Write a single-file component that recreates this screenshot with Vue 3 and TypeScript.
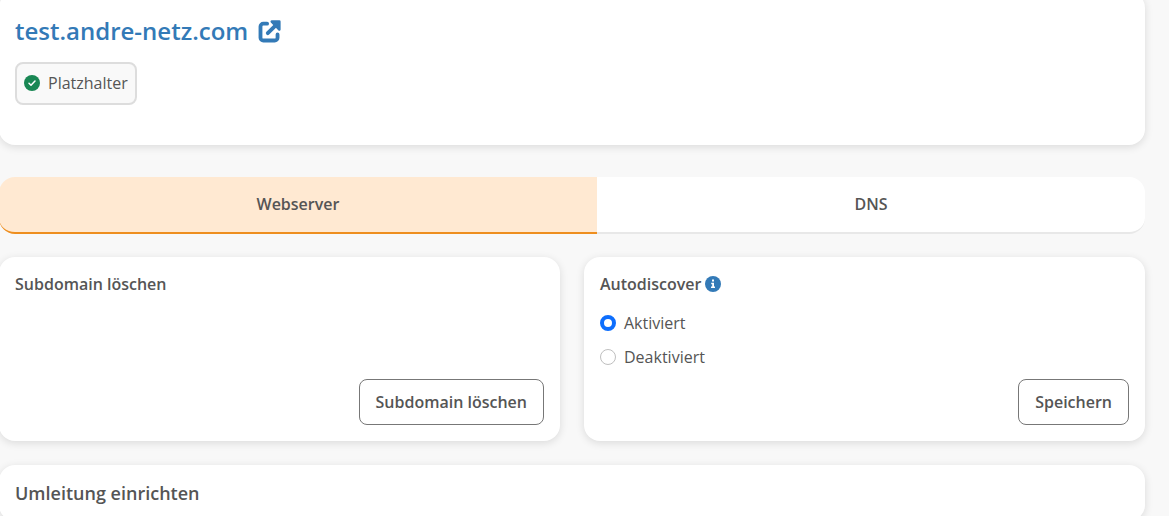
<script setup lang="ts">
import { ref } from 'vue'

type Tab = 'webserver' | 'dns'

const domain = 'test.andre-netz.com'
const tabs: { id: Tab; label: string }[] = [
  { id: 'webserver', label: 'Webserver' },
  { id: 'dns', label: 'DNS' },
]
const options = [
  { id: 'autodiscover-on', value: 'on', label: 'Aktiviert' },
  { id: 'autodiscover-off', value: 'off', label: 'Deaktiviert' },
]
const activeTab = ref<Tab>('webserver')
const autodiscover = ref('on')
</script>

<template>
  <main class="page">
    <section class="card header-card">
      <h1 class="domain">
        <a href="#" class="domain-link">
          {{ domain }}
          <svg class="external" viewBox="0 0 24 24" aria-hidden="true">
            <path
              d="M9.5 3.8H5.6a3 3 0 0 0-3 3v11.6a3 3 0 0 0 3 3h11.8a3 3 0 0 0 3-3V15"
              fill="none" stroke="currentColor" stroke-width="4" stroke-linecap="round"
            />
            <path d="M10.2 13.8 19 5" fill="none" stroke="currentColor" stroke-width="4" stroke-linecap="round" />
            <path d="M14.3 0.3H22.3a1.3 1.3 0 0 1 1.3 1.3V10a1.3 1.3 0 0 1-2.2.9L13.4 2.5a1.3 1.3 0 0 1 .9-2.2Z" fill="currentColor" />
          </svg>
        </a>
      </h1>
      <span class="badge">
        <svg class="dot-icon" viewBox="0 0 16 16" aria-hidden="true">
          <circle cx="8" cy="8" r="8" fill="#198754" />
          <path d="m5 8.3 2 2 4-4.2" fill="none" stroke="#fff" stroke-width="1.5" stroke-linecap="round" stroke-linejoin="round" />
        </svg>
        Platzhalter
      </span>
    </section>

    <div class="tabs" role="tablist">
      <button
        v-for="tab in tabs"
        :key="tab.id"
        type="button"
        role="tab"
        class="tab"
        :class="{ active: activeTab === tab.id }"
        :aria-selected="activeTab === tab.id"
        @click="activeTab = tab.id"
      >{{ tab.label }}</button>
    </div>

    <div class="columns">
      <section class="card">
        <h2 class="title">Subdomain löschen</h2>
        <button type="button" class="action">Subdomain löschen</button>
      </section>
      <form class="card" @submit.prevent>
        <h2 class="title">
          Autodiscover
          <svg class="dot-icon" viewBox="0 0 16 16" aria-hidden="true">
            <circle cx="8" cy="8" r="8" fill="#337ab7" />
            <path d="M7 3.6h2v2H7zM6.2 6.8H9v3.8h1v1.5H6v-1.5h1.2V8.2h-1z" fill="#fff" />
          </svg>
        </h2>
        <div class="options">
          <div v-for="option in options" :key="option.id" class="option">
            <input :id="option.id" v-model="autodiscover" class="radio" type="radio" name="autodiscover" :value="option.value" />
            <label :for="option.id">{{ option.label }}</label>
          </div>
        </div>
        <button type="submit" class="action">Speichern</button>
      </form>
    </div>

    <section class="card">
      <h2 class="title large">Umleitung einrichten</h2>
    </section>
  </main>
</template>

<style>
html {
  background: #f8f8f8;
}
body {
  overflow: hidden;
}
</style>

<style scoped>
.page {
  display: flex;
  flex-direction: column;
  margin: -8px 24px 0 -1px;
  color: #555;
  font: 400 16px/24px "Open Sans", "Noto Sans", sans-serif;
}
.card {
  display: flex;
  flex-direction: column;
  box-sizing: border-box;
  padding: 16px;
  border-radius: 16px;
  background: #fff;
  box-shadow: 0 2px 8px rgba(0, 0, 0, 0.12);
}
.header-card {
  align-items: flex-start;
  gap: 12px;
  margin-bottom: 32px;
  padding: 20px 16px 40px;
}
.domain {
  margin: 0;
  font-size: 24px;
  font-weight: 600;
  line-height: 38px;
}
.domain-link {
  display: flex;
  align-items: center;
  gap: 10px;
  color: #337ab7;
  text-decoration: none;
}
.external {
  width: 23px;
  height: 23px;
}
.badge {
  display: flex;
  align-items: center;
  gap: 8px;
  padding: 7px 7px 8px;
  border: 2px solid #ddd;
  border-radius: 8px;
  background: #f9f9f9;
}
.dot-icon {
  flex: none;
  width: 16px;
  height: 16px;
}
.tabs {
  display: flex;
  overflow: hidden;
  margin-bottom: 23px;
}
.tab {
  flex: 1 1 auto;
  padding: 15px 16px 16px;
  border: 0;
  border-bottom: 2px solid #e8e8e8;
  background: #fff;
  color: inherit;
  font: inherit;
  font-weight: 600;
  cursor: pointer;
}
.tab:first-child {
  border-radius: 16px 0 0 16px;
}
.tab:last-child {
  border-radius: 0 16px 16px 0;
}
.tab.active {
  border-color: #ee8e1e;
  background: #ffe9d2;
}
.columns {
  display: grid;
  grid-template-columns: 1fr 1fr;
  gap: 24px;
  margin-bottom: 24px;
}
.title {
  display: flex;
  align-items: center;
  gap: 4px;
  margin: 0;
  font-size: 16px;
  font-weight: 600;
  line-height: 22px;
}
.large {
  font-size: 18px;
  line-height: 24px;
}
.options {
  display: flex;
  flex-direction: column;
  gap: 10px;
  margin: 16px 0 10px;
}
.option {
  display: flex;
  align-items: center;
  gap: 8px;
}
.radio {
  appearance: none;
  box-sizing: border-box;
  width: 16px;
  height: 16px;
  margin: 0;
  border: 1px solid #bfbfbf;
  border-radius: 50%;
  background: #fff;
}
.radio:checked {
  border: 4px solid #0d6efd;
}
.action {
  align-self: flex-end;
  margin-top: auto;
  padding: 10px 16px;
  border: 1px solid #777;
  border-radius: 8px;
  background: #fff;
  color: inherit;
  font: inherit;
  font-weight: 600;
  cursor: pointer;
}
</style>
